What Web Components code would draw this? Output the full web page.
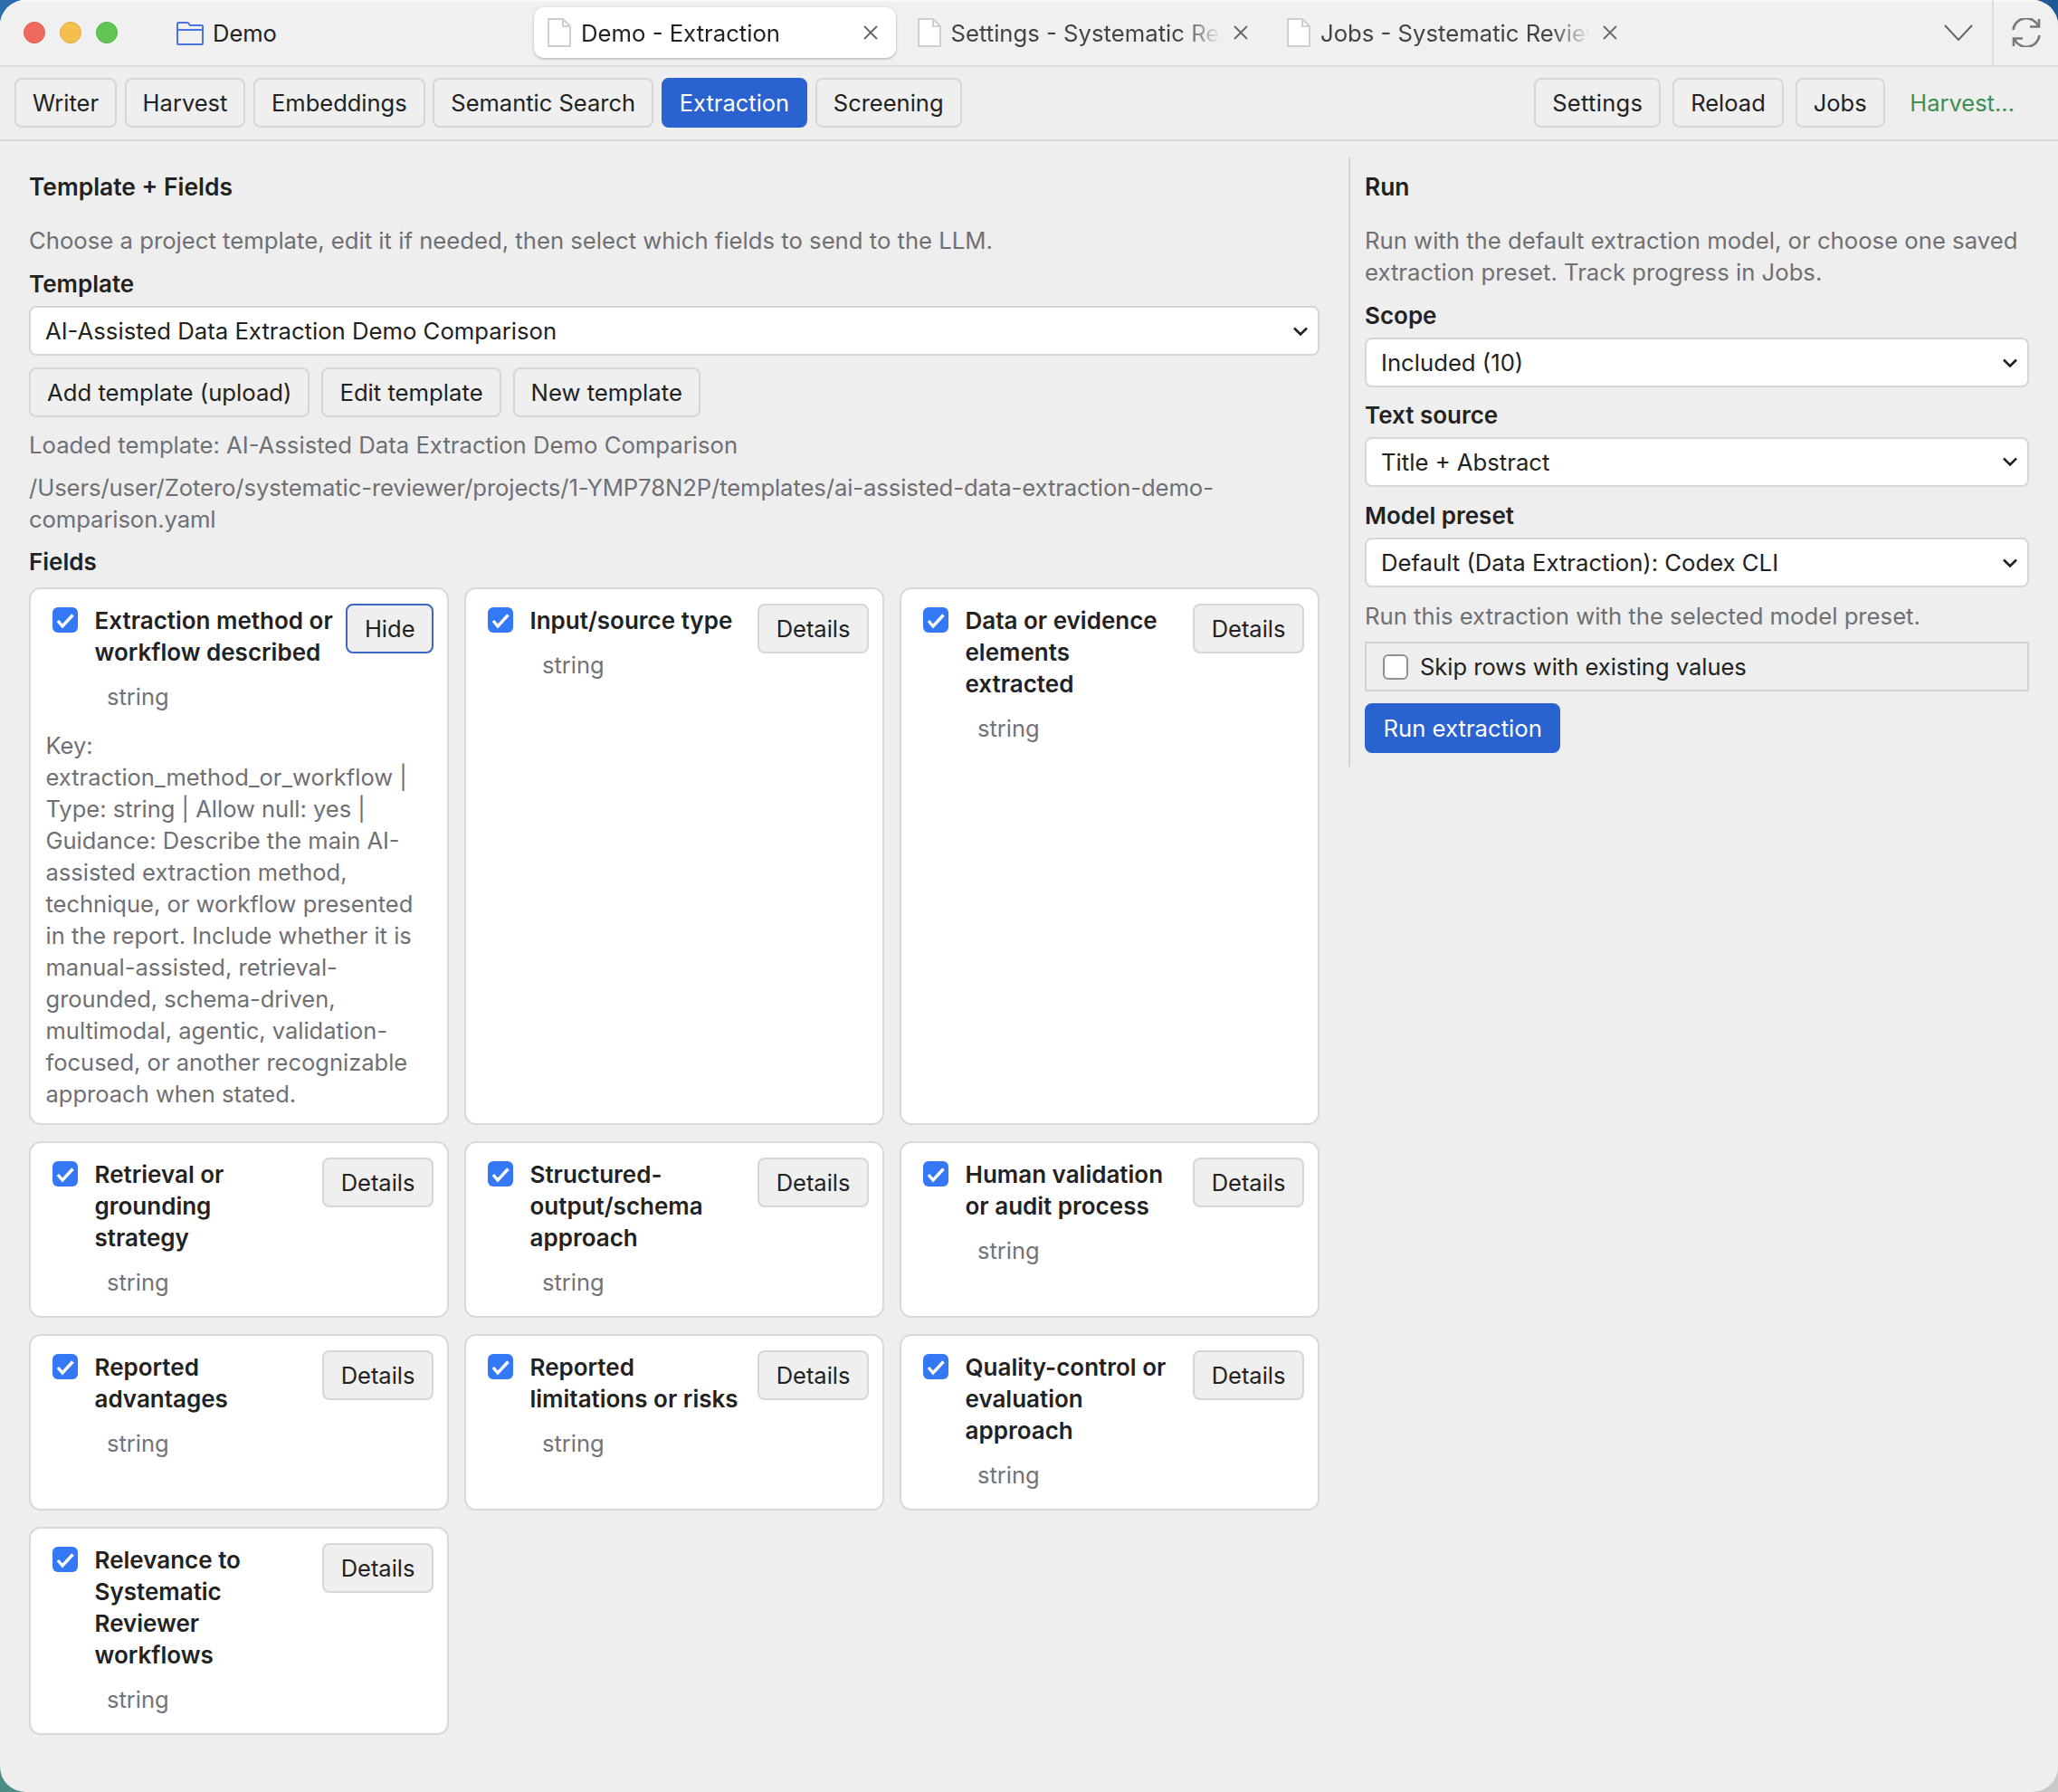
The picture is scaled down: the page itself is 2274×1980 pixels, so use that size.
<!DOCTYPE html>
<html lang="en">
<head>
<meta charset="utf-8">
<title>Demo - Extraction</title>
<style>
    html, body { margin: 0; height: 100%; }
    body {
        font-family: Inter, "Liberation Sans", sans-serif;
        font-size: 25.5px;
        line-height: 35px;
        color: #222;
        background:
            linear-gradient(90deg, #2c6ead 50%, #1f5a96 50%) top / 100% 50% no-repeat,
            linear-gradient(90deg, #4c8c84 50%, #c9c9c9 50%) bottom / 100% 50% no-repeat;
    }
</style>
</head>
<body>
<ui-window>
    <title-bar project="Demo">
        <browser-tab active>Demo - Extraction</browser-tab>
        <browser-tab>Settings - Systematic Review</browser-tab>
        <browser-tab>Jobs - Systematic Review</browser-tab>
    </title-bar>
    <tool-bar>
        <ui-button>Writer</ui-button>
        <ui-button>Harvest</ui-button>
        <ui-button>Embeddings</ui-button>
        <ui-button>Semantic Search</ui-button>
        <ui-button variant="primary">Extraction</ui-button>
        <ui-button>Screening</ui-button>
        <ui-button slot="right" style="letter-spacing:0.3px">Settings</ui-button>
        <ui-button slot="right">Reload</ui-button>
        <ui-button slot="right">Jobs</ui-button>
        <ui-line slot="right" kind="status">Harvest...</ui-line>
    </tool-bar>
    <main-layout>
        <ui-line slot="left" kind="heading">Template + Fields</ui-line>
        <ui-line slot="left" kind="muted" style="--mt:24px">Choose a project template, edit it if needed, then select which fields to send to the LLM.</ui-line>
        <ui-line slot="left" kind="label" style="--mt:13px">Template</ui-line>
        <ui-select slot="left" style="--mt:7px">AI-Assisted Data Extraction Demo Comparison</ui-select>
        <button-row slot="left" style="--mt:13px">
            <ui-button>Add template (upload)</ui-button>
            <ui-button>Edit template</ui-button>
            <ui-button>New template</ui-button>
        </button-row>
        <ui-line slot="left" kind="muted" style="--mt:13px">Loaded template: AI-Assisted Data Extraction Demo Comparison</ui-line>
        <ui-line slot="left" kind="muted" style="--mt:12px; letter-spacing:-0.12px">/Users/user/Zotero/systematic-reviewer/projects/1-YMP78N2P/templates/ai-assisted-data-extraction-demo-<br>comparison.yaml</ui-line>
        <ui-line slot="left" kind="label" style="--mt:12px">Fields</ui-line>
        <field-grid slot="left" style="--mt:11px">
            <field-card action="Hide" open>
                <span slot="label">Extraction method or<br>workflow described</span>
                <span slot="details">Key:<br>extraction_method_or_workflow |<br>Type: string | Allow null: yes |<br>Guidance: Describe the main AI-<br>assisted extraction method,<br>technique, or workflow presented<br>in the report. Include whether it is<br>manual-assisted, retrieval-<br>grounded, schema-driven,<br>multimodal, agentic, validation-<br>focused, or another recognizable<br>approach when stated.</span>
            </field-card>
            <field-card><span slot="label">Input/source type</span></field-card>
            <field-card><span slot="label">Data or evidence<br>elements<br>extracted</span></field-card>
            <field-card><span slot="label">Retrieval or<br>grounding<br>strategy</span></field-card>
            <field-card><span slot="label">Structured-<br>output/schema<br>approach</span></field-card>
            <field-card><span slot="label">Human validation<br>or audit process</span></field-card>
            <field-card><span slot="label">Reported<br>advantages</span></field-card>
            <field-card><span slot="label">Reported<br>limitations or risks</span></field-card>
            <field-card><span slot="label">Quality-control or<br>evaluation<br>approach</span></field-card>
            <field-card><span slot="label">Relevance to<br>Systematic<br>Reviewer<br>workflows</span></field-card>
        </field-grid>

        <ui-line slot="right" kind="heading">Run</ui-line>
        <ui-line slot="right" kind="muted" style="--mt:24px">Run with the default extraction model, or choose one saved<br>extraction preset. Track progress in Jobs.</ui-line>
        <ui-line slot="right" kind="label" style="--mt:13px">Scope</ui-line>
        <ui-select slot="right" style="--mt:7px">Included (10)</ui-select>
        <ui-line slot="right" kind="label" style="--mt:12.5px">Text source</ui-line>
        <ui-select slot="right" style="--mt:7px">Title + Abstract</ui-select>
        <ui-line slot="right" kind="label" style="--mt:14.5px">Model preset</ui-line>
        <ui-select slot="right" style="--mt:7px">Default (Data Extraction): Codex CLI</ui-select>
        <ui-line slot="right" kind="muted" style="--mt:13.5px">Run this extraction with the selected model preset.</ui-line>
        <option-row slot="right" style="--mt:11.5px">Skip rows with existing values</option-row>
        <ui-button slot="right" variant="primary" style="--button-mt:13px">Run extraction</ui-button>
    </main-layout>
</ui-window>

<script>
class UiWindow extends HTMLElement {
    constructor() {
        super();
        this.attachShadow({ mode: 'open' });
    }

    connectedCallback() {
        this.shadowRoot.innerHTML = `
            <style>
                :host {
                    display: flex;
                    flex-direction: column;
                    box-sizing: border-box;
                    height: 100vh;
                    overflow: hidden;
                    background: #eeeeee;
                    border-radius: 28px;
                }
            </style>
            <slot></slot>
        `;
    }
}

class TitleBar extends HTMLElement {
    constructor() {
        super();
        this.attachShadow({ mode: 'open' });
    }

    connectedCallback() {
        this.shadowRoot.innerHTML = `
            <style>
                :host {
                    display: flex;
                    align-items: center;
                    flex: none;
                    box-sizing: border-box;
                    height: 74px;
                    background: #f0f0f0;
                    border-bottom: 2px solid #dcdcdc;
                    box-shadow: inset 0 2px 0 #f8f8f8;
                }
                .lights { display: flex; gap: 16px; margin-left: 26px; flex: none; }
                .lights i { width: 24px; height: 24px; border-radius: 50%; box-sizing: border-box; }
                .red { background: #ee6a5f; border: 1px solid #e0584e; }
                .yellow { background: #f5bf4f; border: 1px solid #e2aa3c; }
                .green { background: #61c554; border: 1px solid #52b146; }
                .project { display: flex; align-items: center; gap: 10px; width: 460px; box-sizing: border-box; padding-left: 65px; flex: none; }
                .tabs { display: flex; gap: 8.5px; flex: none; }
                .end { display: flex; align-items: center; align-self: stretch; margin-left: auto; flex: none; }
                .divider { width: 2px; align-self: stretch; background: #dcdcdc; margin: 0 20px 0 21px; }
                svg { display: block; fill: none; }
            </style>
            <div class="lights"><i class="red"></i><i class="yellow"></i><i class="green"></i></div>
            <div class="project">
                <svg width="30" height="27" viewBox="0 0 30 27" stroke="#4a74e0" stroke-width="2">
                    <path d="M1 8V3.5A1.5 1.5 0 0 1 2.5 2h9.2a2 2 0 0 1 1.5.7L15 5h13a1 1 0 0 1 1 1v19a1 1 0 0 1-1 1H2a1 1 0 0 1-1-1V8z"/>
                    <path d="M1 10h28"/>
                </svg>
                <span>${this.getAttribute('project')}</span>
            </div>
            <div class="tabs"><slot></slot></div>
            <div class="end">
                <svg width="32" height="18" viewBox="0 0 32 18" stroke="#666" stroke-width="2"><path d="M1 1l15 16L31 1"/></svg>
                <div class="divider"></div>
                <svg width="32" height="32" viewBox="0 0 32 32" stroke="#777" stroke-width="2.6" style="margin-right:19px">
                    <path d="M1.5 13A14.5 14.5 0 0 1 29 8.5"/>
                    <path d="M30 1v8.5H20"/>
                    <path d="M30.5 19A14.5 14.5 0 0 1 3 23.5"/>
                    <path d="M2 31v-8.5h10"/>
                </svg>
            </div>
        `;
    }
}

class BrowserTab extends HTMLElement {
    constructor() {
        super();
        this.attachShadow({ mode: 'open' });
    }

    connectedCallback() {
        this.shadowRoot.innerHTML = `
            <style>
                :host {
                    display: flex;
                    align-items: center;
                    box-sizing: border-box;
                    width: 400px;
                    height: 56px;
                    padding: 0 20px 0 15px;
                    color: #444;
                    white-space: nowrap;
                    font-size: 25.7px;
                }
                :host([active]) {
                    background: #fff;
                    border-radius: 11px;
                    color: #222;
                    box-shadow: 0 1px 3px rgba(0, 0, 0, 0.28);
                }
                svg { display: block; flex: none; fill: none; }
                .text {
                    flex: 1;
                    min-width: 0;
                    overflow: hidden;
                    margin: 0 8px 0 11px;
                    -webkit-mask-image: linear-gradient(90deg, #000 84%, transparent 98%);
                    mask-image: linear-gradient(90deg, #000 84%, transparent 98%);
                }
            </style>
            <svg width="26" height="32" viewBox="0 0 26 32" stroke="#cfcfcf" stroke-width="2">
                <path fill="#fff" d="M1 1h16l8 8v22H1z"/>
                <path d="M17 1v8h8"/>
            </svg>
            <span class="text"><slot></slot></span>
            <svg width="16" height="16" viewBox="0 0 16 16" stroke="#666" stroke-width="1.8"><path d="M1 1l14 14M15 1L1 15"/></svg>
        `;
    }
}

class ToolBar extends HTMLElement {
    constructor() {
        super();
        this.attachShadow({ mode: 'open' });
    }

    connectedCallback() {
        this.shadowRoot.innerHTML = `
            <style>
                :host {
                    display: flex;
                    justify-content: space-between;
                    align-items: flex-start;
                    flex: none;
                    box-sizing: border-box;
                    height: 82px;
                    padding: 12px 32px 0 16px;
                    border-bottom: 2px solid #d8d8d8;
                    --button-pad: 18px;
                }
                .group { display: flex; gap: 8.6px; }
                .right { gap: 13px; }
            </style>
            <div class="group"><slot></slot></div>
            <div class="group right"><slot name="right"></slot></div>
        `;
    }
}

class UiButton extends HTMLElement {
    constructor() {
        super();
        this.attachShadow({ mode: 'open' });
    }

    connectedCallback() {
        this.shadowRoot.innerHTML = `
            <style>
                :host {
                    display: inline-flex;
                    align-items: center;
                    box-sizing: border-box;
                    height: 55px;
                    width: max-content;
                    margin-top: var(--button-mt, 0);
                    padding: 0 var(--button-pad, 18.5px);
                    background: #efefef;
                    border: 2px solid #d6d6d6;
                    border-radius: 8px;
                    color: #222;
                    white-space: nowrap;
                    flex: none;
                }
                :host([variant="primary"]) {
                    background: #2a63d0;
                    border-color: #2a63d0;
                    color: #fff;
                }
                :host([variant="outline"]) { border-color: #3e66c6; }
            </style>
            <slot></slot>
        `;
    }
}

class UiLine extends HTMLElement {
    constructor() {
        super();
        this.attachShadow({ mode: 'open' });
    }

    connectedCallback() {
        this.shadowRoot.innerHTML = `
            <style>
                :host { display: block; margin-top: var(--mt, 0); }
                :host([kind="heading"]) { font-weight: 600; font-size: 26.4px; }
                :host([kind="label"]) { font-weight: 600; font-size: 26px; }
                :host([kind="muted"]) { color: #6f6f74; }
                :host([kind="status"]) {
                    display: flex;
                    align-items: center;
                    height: 55px;
                    padding: 0 16px 0 14.5px;
                    color: #3f8f52;
                }
            </style>
            <slot></slot>
        `;
    }
}

class UiSelect extends HTMLElement {
    constructor() {
        super();
        this.attachShadow({ mode: 'open' });
    }

    connectedCallback() {
        this.shadowRoot.innerHTML = `
            <style>
                :host {
                    display: flex;
                    align-items: center;
                    justify-content: space-between;
                    box-sizing: border-box;
                    height: 55px;
                    margin-top: var(--mt, 0);
                    padding: 0 11px 0 16px;
                    background: #fff;
                    border: 2px solid #d6d6d6;
                    border-radius: 8px;
                }
                svg { display: block; fill: none; }
            </style>
            <span><slot></slot></span>
            <svg width="16" height="10" viewBox="0 0 16 10" stroke="#222" stroke-width="2.6"><path d="M1 1.5l7 7 7-7"/></svg>
        `;
    }
}

class ButtonRow extends HTMLElement {
    constructor() {
        super();
        this.attachShadow({ mode: 'open' });
    }

    connectedCallback() {
        this.shadowRoot.innerHTML = `
            <style>
                :host { display: flex; gap: 13px; margin-top: var(--mt, 0); --button-pad: 18px; }
            </style>
            <slot></slot>
        `;
    }
}

class CheckBox extends HTMLElement {
    constructor() {
        super();
        this.attachShadow({ mode: 'open' });
    }

    connectedCallback() {
        const tick = this.hasAttribute('checked')
            ? '<svg width="28" height="28" viewBox="0 0 28 28"><path d="M6 15l5 6L22.5 8.5" fill="none" stroke="#fff" stroke-width="3.4"/></svg>'
            : '';
        this.shadowRoot.innerHTML = `
            <style>
                :host {
                    display: block;
                    flex: none;
                    box-sizing: border-box;
                    width: 28px;
                    height: 28px;
                    background: #fff;
                    border: 2px solid #8f8f98;
                    border-radius: 6px;
                }
                :host([checked]) { background: #3478f6; border: 0; }
                svg { display: block; }
            </style>
            ${tick}
        `;
    }
}

class OptionRow extends HTMLElement {
    constructor() {
        super();
        this.attachShadow({ mode: 'open' });
    }

    connectedCallback() {
        this.shadowRoot.innerHTML = `
            <style>
                :host {
                    display: flex;
                    align-items: center;
                    gap: 13px;
                    box-sizing: border-box;
                    height: 55px;
                    margin-top: var(--mt, 0);
                    padding-left: 18px;
                    border: 2px solid #d2d2d2;
                    font-size: 25.5px;
                }
            </style>
            <check-box></check-box>
            <span><slot></slot></span>
        `;
    }
}

class FieldGrid extends HTMLElement {
    constructor() {
        super();
        this.attachShadow({ mode: 'open' });
    }

    connectedCallback() {
        this.shadowRoot.innerHTML = `
            <style>
                :host {
                    display: grid;
                    grid-template-columns: repeat(3, 1fr);
                    gap: 18px 17px;
                    margin-top: var(--mt, 0);
                }
            </style>
            <slot></slot>
        `;
    }
}

class FieldCard extends HTMLElement {
    constructor() {
        super();
        this.attachShadow({ mode: 'open' });
    }

    connectedCallback() {
        const open = this.hasAttribute('open');
        this.shadowRoot.innerHTML = `
            <style>
                :host {
                    display: block;
                    box-sizing: border-box;
                    padding: 17px 15px 20px 16.5px;
                    background: #fff;
                    border: 2px solid #d8d8d8;
                    border-radius: 13px;
                    font-size: 25.5px;
                }
                .head { display: flex; align-items: flex-start; justify-content: space-between; gap: 13px; }
                .title { display: flex; align-items: flex-start; gap: 18.5px; padding-left: 7.5px; font-weight: 600; font-size: 26px; white-space: nowrap; }
                check-box { margin-top: 3px; }
                .type { margin: 14px 0 0 67.5px; color: #737378; }
                .details { margin: 18.5px 0 -4.5px; color: #6f6f74; white-space: nowrap; }
                ui-button { margin-top: -1.5px; }
            </style>
            <div class="head">
                <div>
                    <div class="title"><check-box checked></check-box><span><slot name="label"></slot></span></div>
                    <div class="type">string</div>
                </div>
                <ui-button ${open ? 'variant="outline"' : ''}>${this.getAttribute('action') || 'Details'}</ui-button>
            </div>
            ${open ? '<div class="details"><slot name="details"></slot></div>' : ''}
        `;
    }
}

class MainLayout extends HTMLElement {
    constructor() {
        super();
        this.attachShadow({ mode: 'open' });
    }

    connectedCallback() {
        this.shadowRoot.innerHTML = `
            <style>
                :host {
                    display: grid;
                    grid-template-columns: 1426px 734px;
                    justify-content: space-between;
                    align-items: start;
                    padding: 18px 32px 0;
                    font-size: 25.7px;
                }
                .left, .right { display: flex; flex-direction: column; padding: 15px 0; }
                .right { position: relative; }
                .right::before {
                    content: "";
                    position: absolute;
                    left: -18px;
                    top: 0;
                    bottom: 0;
                    width: 2px;
                    background: #d4d4d4;
                }
            </style>
            <div class="left"><slot name="left"></slot></div>
            <div class="right"><slot name="right"></slot></div>
        `;
    }
}

customElements.define('ui-window', UiWindow);
customElements.define('title-bar', TitleBar);
customElements.define('browser-tab', BrowserTab);
customElements.define('tool-bar', ToolBar);
customElements.define('ui-button', UiButton);
customElements.define('ui-line', UiLine);
customElements.define('ui-select', UiSelect);
customElements.define('button-row', ButtonRow);
customElements.define('check-box', CheckBox);
customElements.define('option-row', OptionRow);
customElements.define('field-grid', FieldGrid);
customElements.define('field-card', FieldCard);
customElements.define('main-layout', MainLayout);
</script>
</body>
</html>
